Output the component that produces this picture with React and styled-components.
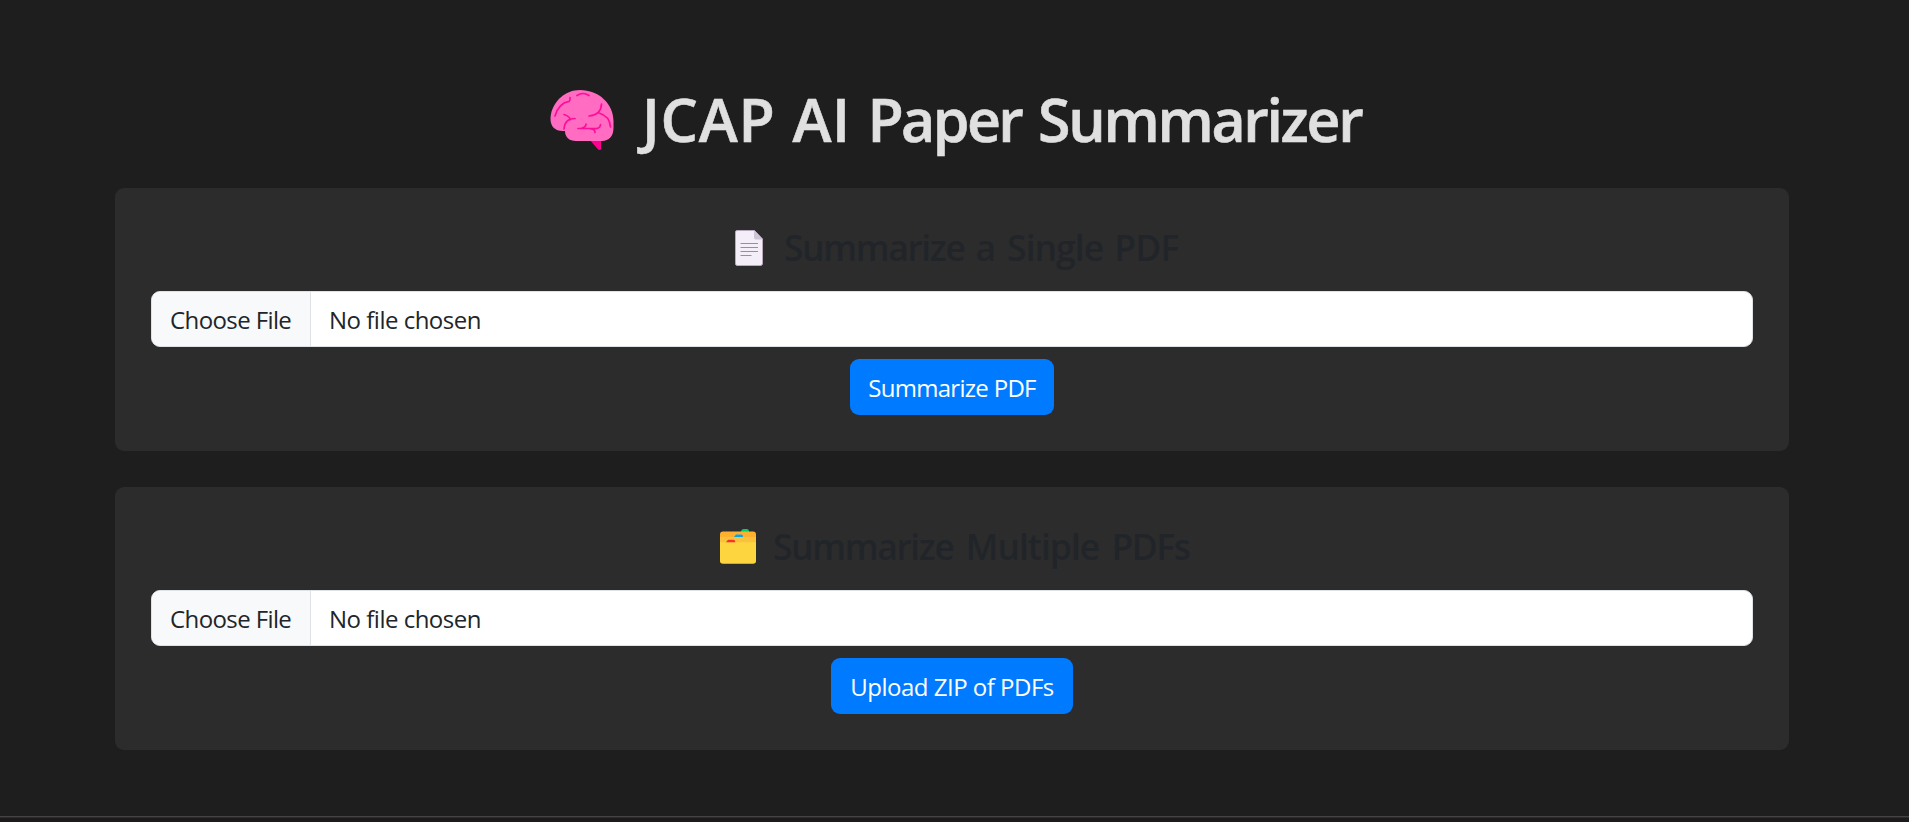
import React from "react";
import styled, { createGlobalStyle } from "styled-components";

const GlobalStyle = createGlobalStyle`
  *, *::before, *::after { box-sizing: border-box; }
  body {
    margin: 0;
    background: #1e1e1e;
    color: #212529;
    font-family: "Segoe UI", "Open Sans", "Noto Sans", sans-serif;
    font-size: 24px;
    line-height: 36px;
    overflow: hidden;
  }
`;

const Page = styled.div`
  display: flex;
  flex-direction: column;
  height: 822px;
`;

const Container = styled.main`
  display: flex;
  flex-direction: column;
  width: 1674px;
  margin-left: 115px;
  padding-top: 84px;
  flex: 1;
`;

const Title = styled.h1`
  display: flex;
  align-items: flex-start;
  height: 72px;
  margin: 0 0 32px;
  padding-left: 435px;
  gap: 28px;
  color: #e0e0e0;
  font-size: 59px;
  font-weight: 600;
  line-height: 70px;
  white-space: nowrap;
  -webkit-text-stroke: 0.6px #e0e0e0;

  svg { margin-top: 6px; }
`;

const Card = styled.section`
  display: flex;
  flex-direction: column;
  align-items: center;
  height: 263px;
  margin-bottom: 36px;
  padding: 36px;
  border-radius: 9px;
  background: #2c2c2c;
`;

const Heading = styled.h2`
  display: flex;
  align-items: center;
  align-self: flex-start;
  height: 47px;
  margin: 0 0 20px;
  padding-left: ${(p) => p.$indent}px;
  gap: ${(p) => p.$gap}px;
  font-size: 35.5px;
  font-weight: 600;
  line-height: 47px;
  white-space: nowrap;
`;

const Text = styled.span`
  letter-spacing: ${(p) => p.$spacing || 0}px;
  word-spacing: ${(p) => p.$words || 0}px;
`;

const FileField = styled.label`
  display: flex;
  width: 100%;
  height: 56px;
  margin-bottom: 12px;
  overflow: hidden;
  border: 1px solid #dee2e6;
  border-radius: 9px;
  background: #fff;
  line-height: 56px;
  white-space: nowrap;
  cursor: pointer;
`;

const ChooseFile = styled.span`
  width: 159px;
  padding-left: 18px;
  border-right: 1px solid #dee2e6;
  background: #f8f9fa;
`;

const FileName = styled.span`
  padding-left: 18px;
`;

const Button = styled.button`
  width: ${(p) => p.$width}px;
  height: 56px;
  padding: 1px 0 0;
  border: 0;
  border-radius: 9px;
  background: #007bff;
  color: #fff;
  font: inherit;
  line-height: 56px;
  white-space: nowrap;
`;

const Footer = styled.footer`
  height: 6px;
  border-top: 1px solid #444;
  background: #1c1a1b;
  box-shadow: inset 0 1px 0 #2c2c2c;
`;

const Icon = styled.svg`
  flex: none;
  display: block;
`;

function BrainIcon() {
  return (
    <Icon width="64" height="60" viewBox="0 0 64 60">
      <path d="M39 49h12v10.200q-1.400 1.600-3 0Z" fill="#ff0090" />
      <path
        d="M30 0C15 0 4 11 1 24C-1 34 3 41 13 41h2C15 47 19 51 26 51H52C59 51 63.500 46 63.500 38V31C63.500 14 49 0 30 0Z"
        fill="#ff6cc2"
      />
      <g fill="none" stroke="#ff0d98" strokeWidth="1.700" strokeLinecap="round">
        <path d="M5 26C7 18 13 12 19 11.500Q20.500 10 20 7.500" />
        <path d="M27 5.500Q33 1.500 39 5.500" />
        <path d="M14 24.500Q19 26 20.500 29.500M25 28.500C18 28.500 14.500 32 14 39" />
        <path d="M39 26Q51 25 51.500 14M49 23C56 25 60 30 60.500 37" />
        <path d="M28 38.500H45Q50 39 50.500 34.500M32 38Q36 37 36 34M41 39Q45 39 45 42.500" />
      </g>
    </Icon>
  );
}

function PageIcon() {
  return (
    <Icon width="28" height="36" viewBox="0 0 28 36">
      <path
        d="M2 .5H19.500L27.500 9V33.500Q27.500 35.500 25.500 35.500H2Q.5 35.500 .5 33.500V2Q.5 .5 2 .5Z"
        fill="#f3eef8"
        stroke="#baa9bd"
      />
      <path d="M19 .5L27.500 9V9.500H21Q19 9.500 19 7.500Z" fill="#cdc4d6" />
      <path d="M5.500 13.500H23M5.500 17.500H23M5.500 21.500H23M5.500 25.500H16.500" stroke="#998da6" strokeWidth="1.100" />
    </Icon>
  );
}

function DividersIcon() {
  return (
    <Icon width="36" height="35" viewBox="0 0 36 35">
      <path d="M20 4L22 .6Q22.500 0 24 0H27Q28.500 0 29 2V4Z" fill="#00d26a" />
      <rect y="2.500" width="36" height="20" rx="3" fill="#ffb02e" />
      <path d="M0 8H36V24H0Z" fill="#f9c23c" />
      <path d="M14 8L16 5.600H21.500Q23 5.600 23 8Z" fill="#00a6ed" />
      <path d="M0 13.200H36V32Q36 34.700 33 34.700H3Q0 34.700 0 32Z" fill="#fcd53f" />
      <path d="M6 13.200L8 10.800H13.500Q15 10.800 15.300 13.200Z" fill="#f8312f" />
    </Icon>
  );
}

function FilePicker({ accept }) {
  return (
    <FileField>
      <input type="file" accept={accept} hidden />
      <ChooseFile><Text $spacing={-0.6}>Choose File</Text></ChooseFile>
      <FileName><Text $spacing={-0.5}>No file chosen</Text></FileName>
    </FileField>
  );
}

export default function App() {
  return (
    <Page>
      <GlobalStyle />
      <Container>
        <Title>
          <BrainIcon />
          <Text $words={1.6}>
            <Text $spacing={0.8}>JCAP</Text> <Text $spacing={0.5}>AI</Text>{" "}
            <Text $spacing={-2.6}>Paper</Text> <Text $spacing={-2.3}>Summarizer</Text>
          </Text>
        </Title>
        <Card>
          <Heading $indent={584} $gap={21}>
            <PageIcon />
            <Text $words={1.8}>
              <Text $spacing={-1.4}>Summarize</Text> a <Text $spacing={-1}>Single</Text>{" "}
              <Text $spacing={-0.7}>PDF</Text>
            </Text>
          </Heading>
          <FilePicker accept=".pdf" />
          <Button $width={204}><Text $spacing={-0.7}>Summarize PDF</Text></Button>
        </Card>
        <Card>
          <Heading $indent={569} $gap={17}>
            <DividersIcon />
            <Text $words={3}>
              <Text $spacing={-1.4}>Summarize</Text> <Text $spacing={-1}>Multiple</Text>{" "}
              <Text $spacing={-1.5}>PDFs</Text>
            </Text>
          </Heading>
          <FilePicker accept=".zip" />
          <Button $width={242}><Text $spacing={-0.5}>Upload ZIP of PDFs</Text></Button>
        </Card>
      </Container>
      <Footer />
    </Page>
  );
}
